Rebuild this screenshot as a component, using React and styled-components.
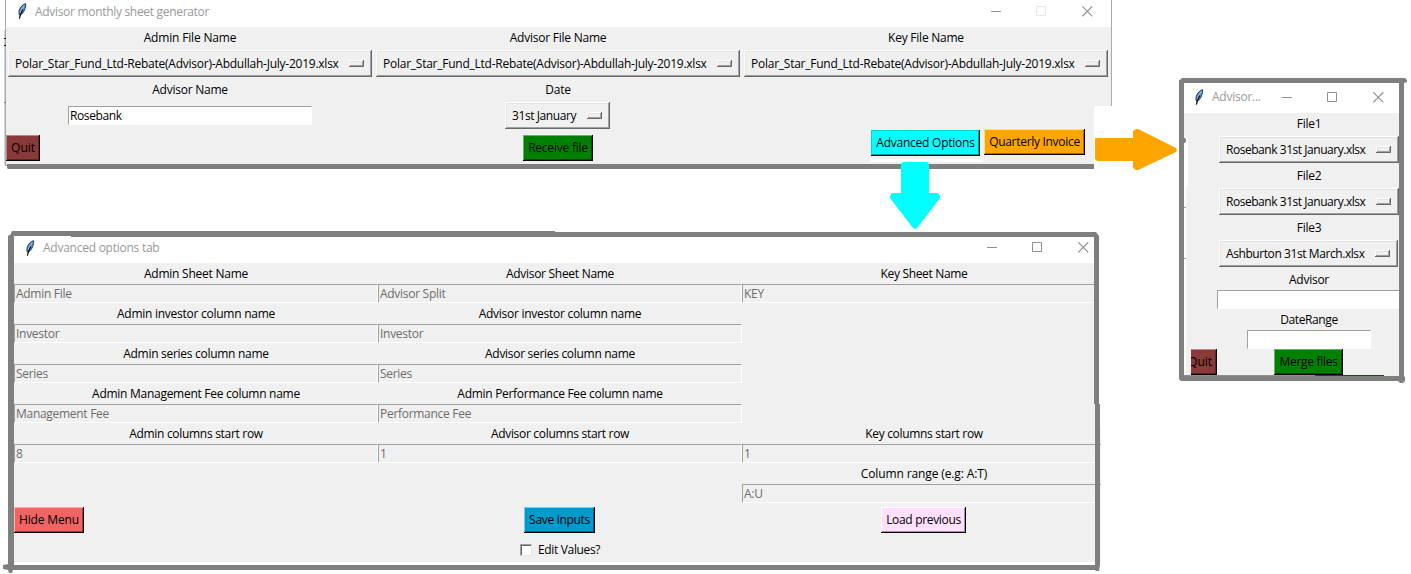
import React from "react";
import styled, { createGlobalStyle } from "styled-components";

const GlobalStyle = createGlobalStyle`
  * { box-sizing: border-box; }
  body { margin: 0; background: #fff; overflow: hidden; }
`;

const Canvas = styled.main`
  position: relative;
  width: 1411px;
  height: 574px;
  overflow: hidden;
  background: #fff;
  color: #000;
  font: 12px/16px "Open Sans", "Noto Sans", sans-serif;
`;

const Window = styled.section`
  position: absolute;
  display: flex;
  flex-direction: column;
  overflow: hidden;
  background: #f0f0f0;
`;

const MainWindow = styled(Window)`
  left: 5px;
  top: 0;
  width: 1107px;
  height: 166px;
  border: solid #a9a9a9;
  border-width: 0 1px 1px;
`;

const OptionsWindow = styled(Window)`
  left: 13px;
  top: 236px;
  width: 1088px;
  height: 326px;
  border-left: 1px solid #a9a9a9;
`;

const InvoiceWindow = styled(Window)`
  left: 1184px;
  top: 83px;
  width: 215px;
  height: 293px;
`;

const TitleBar = styled.header`
  display: flex;
  flex: none;
  align-items: center;
  height: ${(p) => p.$height}px;
  padding: 0 ${(p) => p.$right}px ${(p) => p.$bottom}px ${(p) => p.$left}px;
  background: #fff;
  color: #999;
`;

const Title = styled.span`
  flex: 1;
  margin-left: 8px;
  padding-top: ${(p) => p.$drop ?? 0}px;
  white-space: nowrap;
`;

const WindowControls = styled.div`
  display: flex;
  gap: 34px;
`;

const Text = styled.span`
  white-space: nowrap;
  letter-spacing: ${(p) => p.$track ?? -0.25}px;
`;

const MainGrid = styled.div`
  display: grid;
  grid-template-columns: repeat(3, 368px);
  grid-template-rows: 22px 28px 25px 27px;
  justify-items: center;
  align-items: end;
`;

const FieldLabel = styled.label`
  align-self: center;
`;

const DateSlot = styled.div`
  padding-right: 1px;
`;

const EntrySlot = styled.div`
  align-self: center;
`;

const Actions = styled.div`
  display: grid;
  grid-template-columns: repeat(3, 368px);
  justify-items: center;
  padding-top: 6px;
`;

const LeftAction = styled.div`
  justify-self: start;
`;

const ActionPair = styled.div`
  display: flex;
  gap: 4px;
  align-self: start;
  justify-self: end;
  margin: -6px 25px 0 0;
`;

const OptionsGrid = styled.div`
  display: grid;
  grid-template-columns: repeat(3, 364px);
`;

const Cell = styled.div`
  display: flex;
  flex-direction: column;
  height: 40px;
`;

const CellLabel = styled.label`
  height: 21px;
  line-height: 21px;
  text-align: center;
`;

const OptionsActions = styled.div`
  display: grid;
  grid-template-columns: 364px 363px 365px;
  padding-top: 4px;
`;

const CenterAction = styled.div`
  display: flex;
  justify-content: center;
`;

const CheckRow = styled.label`
  display: flex;
  align-items: center;
  align-self: flex-start;
  gap: 6px;
  height: 16px;
  margin: 9px 0 0 506px;
`;

const CheckBox = styled.span`
  width: 12px;
  height: 12px;
  background: #fff;
  border: 1px solid;
  border-color: #a0a0a0 #e3e3e3 #e3e3e3 #a0a0a0;
  box-shadow: inset 1px 1px #696969;
`;

const InvoiceForm = styled.div`
  display: flex;
  flex-direction: column;
  align-items: center;
  width: 180px;
  margin-left: 35px;
`;

const InvoiceLabel = styled.label`
  height: ${(p) => p.$height ?? 23}px;
  line-height: ${(p) => p.$line ?? 22}px;
`;

const MenuSlot = styled.div`
  align-self: flex-start;
  height: 29px;
`;

const InvoiceActions = styled.div`
  display: flex;
  align-items: flex-start;
  height: 27px;
  margin-left: 7px;
  gap: 57px;
`;

const ClippedLeft = styled.div`
  display: flex;
  justify-content: flex-end;
  width: 26px;
  overflow: hidden;
`;

const MenuButton = styled.button`
  display: flex;
  align-items: center;
  justify-content: space-between;
  width: ${(p) => p.$width}px;
  height: 27px;
  padding: 0 8px 0 7px;
  border: 0;
  color: inherit;
  font: inherit;
  background: #f0f0f0;
  box-shadow: inset -1px -1px #696969, inset 1px 1px #fff,
    inset -2px -2px #a0a0a0, inset 2px 2px #e3e3e3;
`;

const Indicator = styled.span`
  width: 15px;
  height: 7px;
  box-shadow: inset -1px -1px #696969, inset 1px 1px #fff,
    inset -2px -2px #a0a0a0, inset 2px 2px #e3e3e3;
`;

const Entry = styled.div`
  flex: none;
  width: ${(p) => p.$width}px;
  height: 19px;
  padding-left: 1px;
  line-height: 17px;
  background: ${(p) => (p.$disabled ? "#f0f0f0" : "#fff")};
  color: ${(p) => (p.$disabled ? "#6d6d6d" : "#000")};
  border: 1px solid;
  border-color: #a0a0a0 #fff #fff #a0a0a0;
`;

const tones = {
  maroon: ["#8b3a3a", "#bb8484", "#5a2525"],
  green: ["#008000", "#63b263", "#004a00"],
  cyan: ["#00ffff", "#00d2d8", "#009c9c"],
  orange: ["#ffa500", "#ffe079", "#a96c00"],
  coral: ["#f06464", "#ffb0b0", "#9c3d3d"],
  blue: ["#009acd", "#6fd0f5", "#005f82"],
  pink: ["#ffe1ff", "#ffffff", "#a58fa5"],
};

const ActionButton = styled.button`
  flex: none;
  width: ${(p) => p.$width}px;
  height: 26px;
  padding: 0;
  border: 0;
  color: #000;
  font: inherit;
  white-space: nowrap;
  background: ${(p) => tones[p.$tone][0]};
  box-shadow: inset -1px -1px #000,
    inset 1px 1px ${(p) => tones[p.$tone][1]},
    inset -2px -2px ${(p) => tones[p.$tone][2]};
  margin-top: ${(p) => p.$drop ?? 0}px;
`;

const Overlay = styled.svg`
  position: absolute;
  inset: 0;
  pointer-events: none;
`;

function Feather() {
  return (
    <svg width="10" height="16" viewBox="0 0 10 16">
      <path d="M8.500.7C5.900 1.300 3.200 4.200 2.300 7.200c-.5 1.700-.5 3.200-.1 4.600l.8.5c2-.9 3.700-3 4.500-5.500C8.200 5 9.100 2.500 8.500.7Z" fill="#4f8fd8" stroke="#1d2b3a" strokeWidth=".9" />
      <path d="M7.300 2.600C5.400 4.800 3.900 7.300 3.200 10.200" fill="none" stroke="#a9cef5" strokeWidth="1" />
      <path d="M5.800 6.500 3.500 11.500 2.400 15.600" fill="none" stroke="#0b0b0b" strokeWidth="1.200" />
    </svg>
  );
}

function Controls({ dim }) {
  return (
    <WindowControls>
      <svg width="11" height="11"><path d="M0 5.500h10" stroke="#8f8f8f" /></svg>
      <svg width="12" height="11"><path d="M.5.5h9v9h-9Z" fill="none" stroke={dim ? "#e6e6e6" : "#8f8f8f"} /></svg>
      <svg width="11" height="11"><path d="m.3.3 10 10m0-10-10 10" stroke="#8f8f8f" strokeWidth="1.100" /></svg>
    </WindowControls>
  );
}

function OptionMenu({ width, track, children }) {
  return (
    <MenuButton $width={width}>
      <Text $track={track}>{children}</Text>
      <Indicator />
    </MenuButton>
  );
}

const workbook = "Polar_Star_Fund_Ltd-Rebate(Advisor)-Abdullah-July-2019.xlsx";

const fields = [
  ["Admin Sheet Name", "Admin File", -0.24],
  ["Advisor Sheet Name", "Advisor Split", -0.29],
  ["Key Sheet Name", "KEY", -0.33],
  ["Admin investor column name", "Investor", -0.26],
  ["Advisor investor column name", "Investor", -0.27],
  null,
  ["Admin series column name", "Series", -0.28],
  ["Advisor series column name", "Series", -0.3],
  null,
  ["Admin Management Fee column name", "Management Fee", -0.27],
  ["Admin Performance Fee column name", "Performance Fee", -0.29],
  null,
  ["Admin columns start row", "8", -0.3],
  ["Advisor columns start row", "1", -0.31],
  ["Key columns start row", "1", -0.32],
  null,
  null,
  ["Column range (e.g: A:T)", "A:U", -0.12],
];

export default function App() {
  return (
    <Canvas>
      <GlobalStyle />
      <MainWindow>
        <TitleBar $height={27} $left={11} $right={18} $bottom={5}>
          <Feather />
          <Title $drop={2}><Text $track={-0.31}>Advisor monthly sheet generator</Text></Title>
          <Controls dim />
        </TitleBar>
        <MainGrid>
          <FieldLabel><Text $track={-0.17}>Admin File Name</Text></FieldLabel>
          <FieldLabel><Text $track={-0.23}>Advisor File Name</Text></FieldLabel>
          <FieldLabel><Text $track={-0.24}>Key File Name</Text></FieldLabel>
          <OptionMenu width={364} track={-0.245}>{workbook}</OptionMenu>
          <OptionMenu width={364} track={-0.245}>{workbook}</OptionMenu>
          <OptionMenu width={364} track={-0.245}>{workbook}</OptionMenu>
          <FieldLabel><Text $track={-0.25}>Advisor Name</Text></FieldLabel>
          <FieldLabel><Text>Date</Text></FieldLabel>
          <span />
          <EntrySlot><Entry $width={244}><Text $track={-0.4}>Rosebank</Text></Entry></EntrySlot>
          <DateSlot><OptionMenu width={105} track={-0.42}>31st January</OptionMenu></DateSlot>
        </MainGrid>
        <Actions>
          <LeftAction>
            <ActionButton $tone="maroon" $width={34}><Text $track={-0.05}>Quit</Text></ActionButton>
          </LeftAction>
          <ActionButton $tone="green" $width={70}><Text $track={-0.22}>Receive file</Text></ActionButton>
          <ActionPair>
            <ActionButton $tone="cyan" $width={109} $drop={1}><Text $track={-0.24}>Advanced Options</Text></ActionButton>
            <ActionButton $tone="orange" $width={101}><Text $track={-0.3}>Quarterly Invoice</Text></ActionButton>
          </ActionPair>
        </Actions>
      </MainWindow>

      <OptionsWindow>
        <TitleBar $height={27} $left={11} $right={12} $bottom={4}>
          <Feather />
          <Title><Text>Advanced options tab</Text></Title>
          <Controls />
        </TitleBar>
        <OptionsGrid>
          {fields.map((field, i) => (
            <Cell key={i}>
              {field && (
                <>
                  <CellLabel><Text $track={field[2]}>{field[0]}</Text></CellLabel>
                  <Entry $width={364} $disabled><Text $track={-0.29}>{field[1]}</Text></Entry>
                </>
              )}
            </Cell>
          ))}
        </OptionsGrid>
        <OptionsActions>
          <LeftAction>
            <ActionButton $tone="coral" $width={70}><Text $track={-0.15}>Hide Menu</Text></ActionButton>
          </LeftAction>
          <CenterAction>
            <ActionButton $tone="blue" $width={71}><Text $track={-0.31}>Save inputs</Text></ActionButton>
          </CenterAction>
          <CenterAction>
            <ActionButton $tone="pink" $width={85}><Text $track={-0.33}>Load previous</Text></ActionButton>
          </CenterAction>
        </OptionsActions>
        <CheckRow>
          <CheckBox />
          <Text $track={-0.34}>Edit Values?</Text>
        </CheckRow>
      </OptionsWindow>

      <InvoiceWindow>
        <TitleBar $height={30} $left={10} $right={15} $bottom={2}>
          <Feather />
          <Title><Text>Advisor...</Text></Title>
          <Controls />
        </TitleBar>
        <InvoiceForm>
          <InvoiceLabel><Text>File1</Text></InvoiceLabel>
          <MenuSlot><OptionMenu width={180} track={-0.46}>Rosebank 31st January.xlsx</OptionMenu></MenuSlot>
          <InvoiceLabel><Text>File2</Text></InvoiceLabel>
          <MenuSlot><OptionMenu width={180} track={-0.46}>Rosebank 31st January.xlsx</OptionMenu></MenuSlot>
          <InvoiceLabel><Text>File3</Text></InvoiceLabel>
          <MenuSlot><OptionMenu width={179} track={-0.42}>Ashburton 31st March.xlsx</OptionMenu></MenuSlot>
          <InvoiceLabel $height={21} $line={21}><Text>Advisor</Text></InvoiceLabel>
          <Entry $width={184} />
          <InvoiceLabel $height={21} $line={21}><Text $track={-0.4}>DateRange</Text></InvoiceLabel>
          <Entry $width={124} />
        </InvoiceForm>
        <InvoiceActions>
          <ClippedLeft>
            <ActionButton $tone="maroon" $width={34}><Text $track={-0.05}>Quit</Text></ActionButton>
          </ClippedLeft>
          <ActionButton $tone="green" $width={69}><Text $track={-0.3}>Merge files</Text></ActionButton>
        </InvoiceActions>
      </InvoiceWindow>

      <Overlay width="1411" height="574" viewBox="0 0 1411 574">
        {/* pasted-over patches beside the buttons and window edges */}
        <g fill="#fff">
          <path d="M1094 106h20v64h-20ZM870 159h113v3H870ZM14 562h1087v3H14ZM1184 138h4v49h-4ZM1184 187h2v188h-2ZM1100 400h2v26h-2ZM1099 231h3v173h-3Z" />
        </g>
        <path d="M4.500 30v135" stroke="#ccd6dc" />
        <path d="M4 38.500h2M4 45.500h2" stroke="#111" />
        <path d="M4 102.500h2" stroke="#b87320" />
        <path d="M1184 207.500h2M1184 258.500h2" stroke="#a0a0a0" />
        <path d="M1184 375.500h131" stroke="#8f8f8f" />
        <path d="M1315 375.500h69" stroke="#174a17" />
        <g fill="#7f7f7f">
          <path d="M7 164h1087v5H8l-1-1Z" />
          <path d="M11 233l1-2h543v1h541l3 4v168h1v161l-1 6h-3l-1-1H13l-1 3H9l-1-3-5-1v-4l5-1V236l3-2Zm3 4v328h1081V404h-1V237H71v-1H14Z" fillRule="evenodd" />
          <path d="M1180 80l2-2h223l2 2v2l-3 1v293l1 1v4l-2 2h-3l-2-2h-217l-2-2V80Zm4 3v293h215V83Z" fillRule="evenodd" />
          <path d="M1184 138h1l1 2v1l-1 2h-1Z" />
        </g>
        <path d="m903 162h24l2 2v29h9l2 3v2l-23 30-2 1-2-1-23-30v-2l2-3h9v-29Z" fill="#0ff" />
        <path d="M1097 138h36v-7l3-2h2l38 19 1 2-1 2-38 18h-2l-3-2v-7h-36l-2-2v-21Z" fill="orange" />
      </Overlay>
    </Canvas>
  );
}
